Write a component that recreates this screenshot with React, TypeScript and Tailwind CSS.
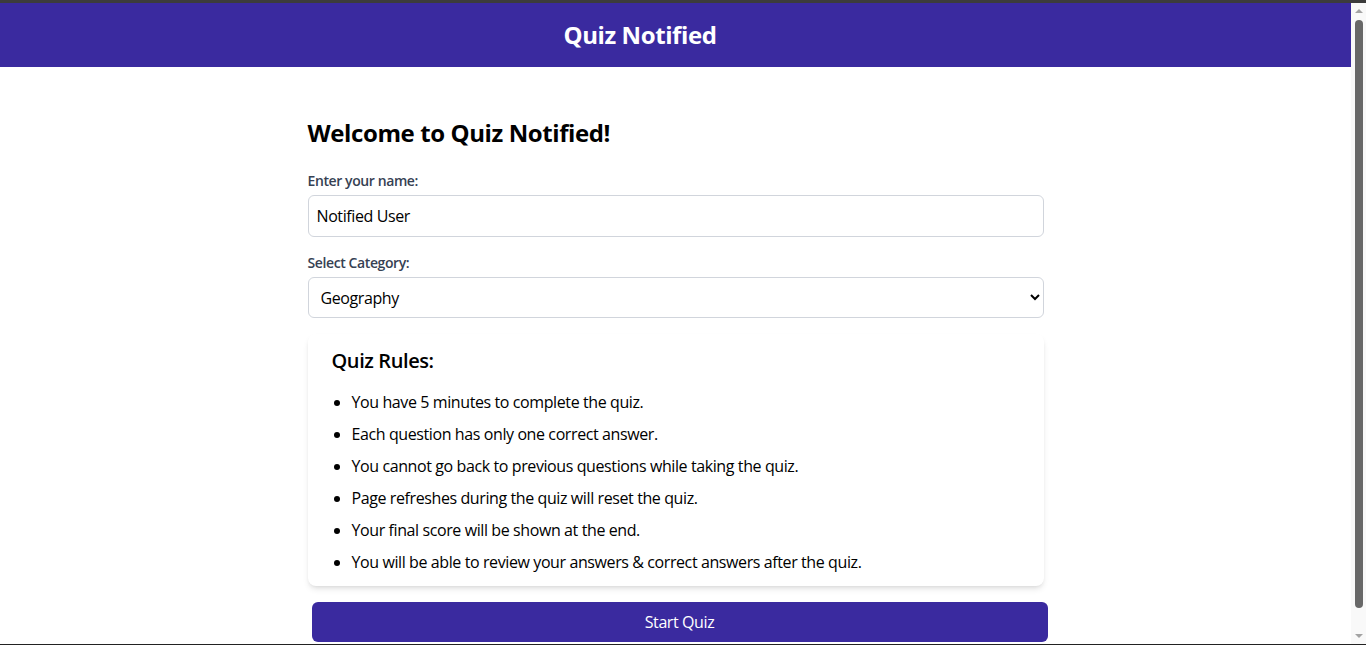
import { useState } from 'react';

const rules = [
  'You have 5 minutes to complete the quiz.',
  'Each question has only one correct answer.',
  'You cannot go back to previous questions while taking the quiz.',
  'Page refreshes during the quiz will reset the quiz.',
  'Your final score will be shown at the end.',
  'You will be able to review your answers & correct answers after the quiz.',
];

// window scrollbar, as it shows in the reference
function Scrollbar() {
  return (
    <aside className="w-[15px] shrink-0 bg-[#f9f9f9] flex flex-col items-center">
      <div className="mt-[6px] w-0 h-0 border-l-[4px] border-r-[4px] border-b-[4px] border-l-transparent border-r-transparent border-b-[#a3a3a3]" />
      <div className="mt-[7px] w-2 h-[588px] rounded-full bg-[#686868]" />
      <div className="mt-auto mb-[6px] w-0 h-0 border-l-[4px] border-r-[4px] border-t-[4px] border-l-transparent border-r-transparent border-t-[#a3a3a3]" />
    </aside>
  );
}

export default function App() {
  const [name, setName] = useState('Notified User');
  const [category, setCategory] = useState('Geography');

  return (
    <div className="h-screen flex flex-col bg-white font-['Open_Sans',sans-serif] tracking-tight text-black overflow-hidden">
      <div className="h-[3px] shrink-0 bg-[#3c3c3c]" />
      <div className="flex flex-1 min-h-0">
        <div className="flex-1 min-w-0 overflow-hidden">
          <header className="h-16 bg-[#3a2a9f] flex items-center justify-center pr-[71px]">
            <h1 className="text-2xl font-bold text-white">Quiz Notified</h1>
          </header>

          <main className="w-[736px] mx-auto pt-[50px] pb-10">
            <h2 className="text-2xl font-bold mb-[22px]">Welcome to Quiz Notified!</h2>

            <label className="block text-sm font-semibold text-gray-700 mb-1">Enter your name:</label>
            <input
              value={name}
              onChange={(e) => setName(e.target.value)}
              className="block w-full border border-gray-300 rounded-md px-2 py-2 text-base mb-4 outline-none"
            />

            <label className="block text-sm font-semibold text-gray-700 mb-1">Select Category:</label>
            <select
              value={category}
              onChange={(e) => setCategory(e.target.value)}
              className="block w-full h-[41px] border border-gray-300 rounded-md px-2 text-base mb-4 bg-white"
            >
              <option>Geography</option>
              <option>History</option>
              <option>Science</option>
              <option>Sports</option>
            </select>

            <div className="rounded-lg shadow-md bg-white px-6 pt-[13px] pb-3">
              <h3 className="text-xl font-semibold mb-[15px]">Quiz Rules:</h3>
              <ul className="list-disc pl-5 space-y-2">
                {rules.map((r) => (
                  <li key={r} className="text-base">{r}</li>
                ))}
              </ul>
            </div>

            <button className="mt-4 ml-1 w-full h-10 rounded-md bg-[#3a2a9f] text-white text-base">
              Start Quiz
            </button>
          </main>
        </div>
        <Scrollbar />
      </div>
      <div className="h-px shrink-0 bg-[#222]" />
    </div>
  );
}
